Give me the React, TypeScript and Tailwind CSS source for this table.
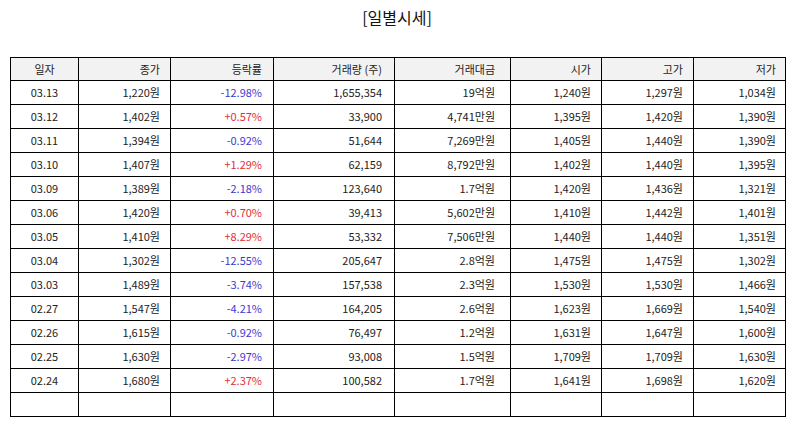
const rows: string[][] = [
  ['03.13', '1,220원', '-12.98%', '1,655,354', '19억원', '1,240원', '1,297원', '1,034원'],
  ['03.12', '1,402원', '+0.57%', '33,900', '4,741만원', '1,395원', '1,420원', '1,390원'],
  ['03.11', '1,394원', '-0.92%', '51,644', '7,269만원', '1,405원', '1,440원', '1,390원'],
  ['03.10', '1,407원', '+1.29%', '62,159', '8,792만원', '1,402원', '1,440원', '1,395원'],
  ['03.09', '1,389원', '-2.18%', '123,640', '1.7억원', '1,420원', '1,436원', '1,321원'],
  ['03.06', '1,420원', '+0.70%', '39,413', '5,602만원', '1,410원', '1,442원', '1,401원'],
  ['03.05', '1,410원', '+8.29%', '53,332', '7,506만원', '1,440원', '1,440원', '1,351원'],
  ['03.04', '1,302원', '-12.55%', '205,647', '2.8억원', '1,475원', '1,475원', '1,302원'],
  ['03.03', '1,489원', '-3.74%', '157,538', '2.3억원', '1,530원', '1,530원', '1,466원'],
  ['02.27', '1,547원', '-4.21%', '164,205', '2.6억원', '1,623원', '1,669원', '1,540원'],
  ['02.26', '1,615원', '-0.92%', '76,497', '1.2억원', '1,631원', '1,647원', '1,600원'],
  ['02.25', '1,630원', '-2.97%', '93,008', '1.5억원', '1,709원', '1,709원', '1,630원'],
  ['02.24', '1,680원', '+2.37%', '100,582', '1.7억원', '1,641원', '1,698원', '1,620원'],
]

const headers = ['일자', '종가', '등락률', '거래량 (주)', '거래대금', '시가', '고가', '저가']
const widths = ['w-[68px]', 'w-[92px]', 'w-[103px]', 'w-[121px]', 'w-[116px]', 'w-[91px]', 'w-[92px]', 'w-[92px]']
// per-column alignment / right padding, read off the reference
const align = [
  'text-center',
  'text-right pr-[10px]',
  'text-right pr-[11px]',
  'text-right pr-[12px]',
  'text-right pr-[15px]',
  'text-right pr-[10px]',
  'text-right pr-[10px]',
  'text-right pr-[9px]',
]

function rateColor(v: string) {
  if (v.startsWith('+')) return 'text-[#e0303a]'
  if (v.startsWith('-')) return 'text-[#3b3bd0]'
  return ''
}

export default function App() {
  return (
    <div
      className="w-[794px] h-[425px] bg-white text-[#222] overflow-hidden"
      style={{ fontFamily: '"Noto Sans CJK KR", "Noto Sans", sans-serif' }}
    >
      <h1 className="pt-[5px] h-[57px] text-center text-[16px] leading-[24px] font-normal text-[#111]">
        [일별시세]
      </h1>
      <table className="ml-[10px] w-[775px] table-fixed border-collapse text-[11px]">
        <colgroup>
          {widths.map((w, i) => (
            <col key={i} className={w} />
          ))}
        </colgroup>
        <thead>
          <tr className="h-[23px] bg-[#f2f2f2]">
            {headers.map((h, i) => (
              <th key={h} className={`border-[1.5px] border-black font-normal leading-none ${align[i]}`}>
                {h}
              </th>
            ))}
          </tr>
        </thead>
        <tbody>
          {rows.map((r) => (
            <tr key={r[0]} className="h-[24px]">
              {r.map((c, i) => (
                <td
                  key={i}
                  className={`border-[1.5px] border-black leading-none ${align[i]} ${i === 2 ? rateColor(c) : ''}`}
                >
                  {c}
                </td>
              ))}
            </tr>
          ))}
          <tr className="h-[24px]">
            {headers.map((h) => (
              <td key={h} className="border-[1.5px] border-black" />
            ))}
          </tr>
        </tbody>
      </table>
    </div>
  )
}
